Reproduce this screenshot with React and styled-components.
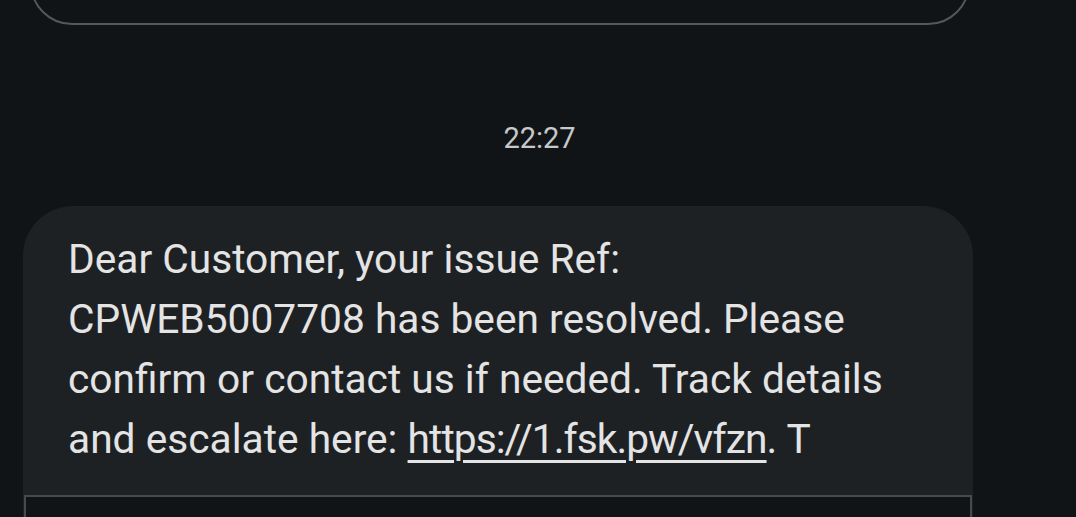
import React from "react";
import styled, { createGlobalStyle } from "styled-components";

const Global = createGlobalStyle`
  html, body { margin: 0; padding: 0; background: #111417; }
  body { width: 1076px; height: 517px; overflow: hidden; font-family: Roboto, "Noto Sans", sans-serif; }
`;

const Screen = styled.div`
  display: flex;
  flex-direction: column;
  width: 1076px;
  height: 517px;
  overflow: hidden;
  background: #111417;
`;

const OutlinedBubble = styled.div`
  box-sizing: border-box;
  margin: -76px 0 0 30px;
  width: 940px;
  height: 101px;
  border: 2px solid #54575b;
  border-radius: 42px;
  flex-shrink: 0;
`;

const Timestamp = styled.div`
  margin-top: 95px;
  height: 36px;
  text-align: center;
  font-size: 29px;
  line-height: 36px;
  color: #c7c8c9;
  flex-shrink: 0;
  padding-left: 3px;
`;

const Bubble = styled.div`
  box-sizing: border-box;
  margin: 50px 0 0 23px;
  width: 950px;
  background: #1e2124;
  border-radius: 50px 50px 0 0;
  padding-top: 23px;
  flex-shrink: 0;
  overflow: hidden;
`;

const Body = styled.p`
  margin: 0;
  padding: 0 30px 0 45px;
  font-size: 40.7px;
  line-height: 60px;
  color: #e4e4e5;
  white-space: nowrap;
`;

const Link = styled.a`
  color: inherit;
  letter-spacing: -0.95px;
  text-decoration: underline;
  text-decoration-thickness: 3px;
  text-underline-offset: 7px;
`;

const PreviewCard = styled.div`
  box-sizing: border-box;
  margin: 26px 1px 0 1px;
  height: 60px;
  border: 2px solid #46494d;
  border-bottom: none;
  background: #111417;
`;

const Line = styled.span`
  display: block;
`;

export default function App() {
  return (
    <>
      <Global />
      <Screen>
        <OutlinedBubble />
        <Timestamp>22:27</Timestamp>
        <Bubble>
          <Body>
            <Line>Dear Customer, your issue Ref:</Line>
            <Line>CPWEB5007708 has been resolved. Please</Line>
            <Line>confirm or contact us if needed. Track details</Line>
            <Line>
              and escalate here: <Link href="#">https://1.fsk.pw/vfzn</Link>. T
            </Line>
          </Body>
          <PreviewCard />
        </Bubble>
      </Screen>
    </>
  );
}
